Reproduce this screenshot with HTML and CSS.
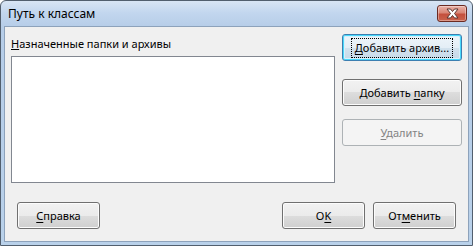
FILE: index.html
```html
<!DOCTYPE html>
<html>
<head>
<meta charset="utf-8">
<link rel="stylesheet" href="styles.css">
</head>
<body>
<div class="window">
  <div class="titlebar">
    <span class="title">Путь к классам</span>
    <span class="close">
      <svg width="17" height="11" viewBox="0 0 17 11">
        <path d="M3 1 L6.5 1 L8.5 3.5 L10.5 1 L14 1 L10.5 5.5 L14 10 L10.5 10 L8.5 7.5 L6.5 10 L3 10 L6.5 5.5 Z" fill="#ffffff" stroke="#5a3530" stroke-width="1" stroke-linejoin="round"/>
      </svg>
    </span>
  </div>
  <div class="client">
    <div class="main">
      <div class="left">
        <div class="label"><u>Н</u>азначенные папки и архивы</div>
        <div class="list"></div>
      </div>
      <div class="right">
        <button class="btn focused"><span class="focusrect"><u>Д</u>обавить архив...</span></button>
        <button class="btn second"><span>Добавить <u>п</u>апку</span></button>
        <button class="btn disabled"><span><u>У</u>далить</span></button>
      </div>
    </div>
    <div class="footer">
      <button class="btn small"><span><u>С</u>правка</span></button>
      <div class="spacer"></div>
      <button class="btn small"><span>O<u>K</u></span></button>
      <button class="btn small"><span>От<u>м</u>енить</span></button>
    </div>
  </div>
</div>
</body>
</html>
```

FILE: styles.css
```css
* { box-sizing: border-box; }
html, body { margin: 0; padding: 0; }
body {
  width: 473px;
  height: 246px;
  overflow: hidden;
  background: #ffffff;
  font-family: "Noto Sans", "Liberation Sans", sans-serif;
  font-size: 11px;
  color: #000;
}
.window {
  width: 473px;
  height: 246px;
  border: 1px solid #525f6e;
  border-radius: 6px 6px 0 0;
  background: linear-gradient(#d8e5f4 0px, #c2d6ee 12px, #b6cde8 26px, #b9d1ea 100%);
  display: flex;
  flex-direction: column;
  padding: 0 3px 3px 3px;
}
.titlebar {
  height: 25px;
  display: flex;
  align-items: flex-start;
  padding-left: 4px;
}
.title {
  margin-top: 4px;
  font-size: 12px;
  color: #000;
}
.close {
  margin-left: auto;
  margin-top: 4px;
  margin-right: 2px;
  width: 30px;
  height: 17px;
  border: 1px solid #6b2a22;
  border-radius: 3px;
  background: linear-gradient(#e9b2a8 0%, #d98676 45%, #c4503d 55%, #c9624c 100%);
  display: flex;
  align-items: center;
  justify-content: center;
  box-shadow: inset 0 0 0 1px rgba(255,255,255,0.35);
}
.close svg { display: block; }
.client {
  flex: 1;
  background: #f0f0f0;
  border: 1px solid #8da2bb;
  display: flex;
  flex-direction: column;
  padding: 7px 6px 12px 6px;
}
.main {
  display: flex;
  gap: 7px;
}
.left {
  width: 324px;
  display: flex;
  flex-direction: column;
}
.label {
  height: 22px;
  padding-top: 2px;
  line-height: 16px;
}
.list {
  height: 127px;
  background: #fff;
  border: 1px solid #828790;
}
.right {
  width: 120px;
  display: flex;
  flex-direction: column;
}
.btn {
  font-family: "Noto Sans", "Liberation Sans", sans-serif;
  font-size: 11px;
  color: #000;
  height: 27px;
  border: 1px solid #707070;
  border-radius: 3px;
  background: linear-gradient(#f2f2f2 0%, #ebebeb 50%, #dddddd 50%, #cfcfcf 100%);
  box-shadow: inset 0 0 0 1px #fcfcfc;
  padding: 0;
  display: flex;
  align-items: center;
  justify-content: center;
}
.btn u { text-decoration: underline; text-underline-offset: 2px; }
.focused {
  border-color: #3c7fb1;
  box-shadow: inset 0 0 0 1px #48d8fb, inset 0 0 0 2px #d6f0fb;
  background: linear-gradient(#eef5fa 0%, #e4eef6 50%, #d3e2ee 50%, #c6d9e8 100%);
}
.focusrect {
  border: 1px dotted #000;
  padding: 1px 3px;
  line-height: 16px;
}
.second { margin-top: 18px; }
.disabled {
  margin-top: 13px;
  border-color: #adb2b5;
  background: #f4f4f4;
  box-shadow: none;
  color: #838383;
}
.footer {
  margin-top: auto;
  display: flex;
  gap: 8px;
  padding-left: 6px;
  padding-right: 6px;
}
.spacer { flex: 1; }
.small { width: 83px; }
```
